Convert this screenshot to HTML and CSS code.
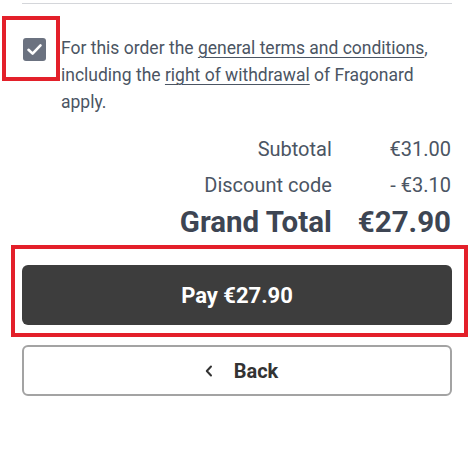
FILE: index.html
```html
<!DOCTYPE html>
<html lang="en">
<head>
<meta charset="utf-8">
<title>Checkout</title>
<link rel="stylesheet" href="styles.css">
</head>
<body>
<div class="page">
  <hr class="divider">
  <div class="terms">
    <span class="checkbox">
      <svg width="23" height="23" viewBox="0 0 23 23"><polyline points="5.5,11.8 9.6,15.6 17.5,7.4" fill="none" stroke="#fff" stroke-width="2.6" stroke-linecap="round" stroke-linejoin="round"/></svg>
      <span class="mark mark-check"></span>
    </span>
    <p class="terms-text">For this order the <a href="#">general terms and conditions</a>, including the <a href="#">right of withdrawal</a> of Fragonard apply.</p>
  </div>
  <div class="totals">
    <span class="label">Subtotal</span><span class="value">€31.00</span>
    <span class="label">Discount code</span><span class="value">- €3.10</span>
    <span class="label grand">Grand Total</span><span class="value grand">€27.90</span>
  </div>
  <div class="pay-wrap">
    <button class="btn-pay">Pay €27.90</button>
    <span class="mark mark-pay"></span>
  </div>
  <button class="btn-back">
    <svg width="8" height="12" viewBox="0 0 8 12"><polyline points="6,1.5 1.8,6 6,10.5" fill="none" stroke="#333" stroke-width="2" stroke-linecap="round" stroke-linejoin="round"/></svg>
    <span>Back</span>
  </button>
</div>
</body>
</html>
```
FILE: styles.css
```css
* { box-sizing: border-box; }
html, body { margin: 0; padding: 0; background: #fff; }
body { font-family: Roboto, "Noto Sans", Arial, sans-serif; color: #4b5563; }
.page { width: 452px; padding-left: 22px; }
.divider { margin: 3px 0 0; border: 0; border-top: 1px solid #d4d6da; height: 0; }
.terms { display: flex; align-items: flex-start; margin-top: 31px; }
.checkbox { position: relative; flex: none; width: 23px; height: 23px; margin: 3px 15px 0 1px; background: #6b7280; border-radius: 3px; }
.checkbox svg { display: block; }
.terms-text { margin: 0; font-size: 17.5px; line-height: 27px; }
.terms-text a { color: inherit; text-decoration: underline; text-underline-offset: 3px; text-decoration-thickness: 1px; }
.totals { display: grid; grid-template-columns: 1fr auto; column-gap: 26px; margin-top: 15px; padding-right: 1px; text-align: right; font-size: 20px; line-height: 36px; }
.totals .grand { font-size: 29.5px; line-height: 38px; font-weight: 700; color: #3d4553; }
.pay-wrap { position: relative; margin-top: 24px; }
.btn-pay { display: block; width: 100%; height: 60px; border: 0; border-radius: 6px; background: #3d3d3d; color: #fff; font-family: inherit; font-size: 22px; font-weight: 700; }
.btn-back { display: flex; align-items: center; justify-content: center; gap: 21px; width: 100%; height: 51px; margin-top: 20px; padding: 0 0 0 9px; background: #fff; border: 2px solid #a3a3a3; border-radius: 6px; color: #333; font-family: inherit; font-size: 20px; font-weight: 700; }
.btn-back svg { display: block; }
.mark { position: absolute; border: 4px solid #e3202a; pointer-events: none; }
.mark-check { left: -21px; top: -22px; width: 58px; height: 65px; }
.mark-pay { left: -11px; top: -20px; width: 457px; height: 92px; }
```
